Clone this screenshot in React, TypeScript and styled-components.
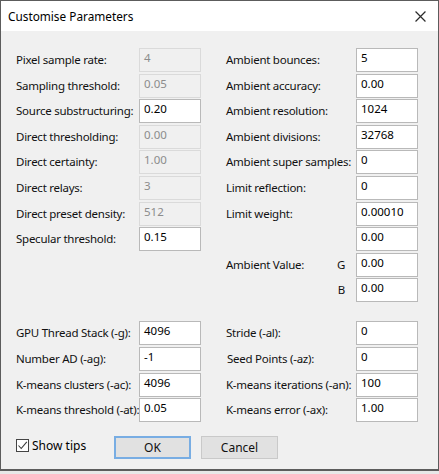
import styled, { createGlobalStyle } from 'styled-components';

const GlobalStyle = createGlobalStyle`
  html, body {
    margin: 0;
    padding: 0;
    background: #e8e8e8;
  }
  body {
    font-family: 'Noto Sans', 'Liberation Sans', sans-serif;
    font-size: 11.5px;
    color: #000;
  }
`;

type Field = { label: string; value: string; enabled?: boolean; side?: string; indent?: number };

const leftTop: Field[] = [
  { label: 'Pixel sample rate:', value: '4' },
  { label: 'Sampling threshold:', value: '0.05' },
  { label: 'Source substructuring:', value: '0.20', enabled: true },
  { label: 'Direct thresholding:', value: '0.00' },
  { label: 'Direct certainty:', value: '1.00' },
  { label: 'Direct relays:', value: '3' },
  { label: 'Direct preset density:', value: '512' },
  { label: 'Specular threshold:', value: '0.15', enabled: true },
];

const rightTop: Field[] = [
  { label: 'Ambient bounces:', value: '5', enabled: true },
  { label: 'Ambient accuracy:', value: '0.00', enabled: true },
  { label: 'Ambient resolution:', value: '1024', enabled: true },
  { label: 'Ambient divisions:', value: '32768', enabled: true },
  { label: 'Ambient super samples:', value: '0', enabled: true },
  { label: 'Limit reflection:', value: '0', enabled: true },
  { label: 'Limit weight:', value: '0.00010', enabled: true },
  { label: '', value: '0.00', enabled: true },
  { label: 'Ambient Value:', value: '0.00', enabled: true, side: 'G' },
  { label: '', value: '0.00', enabled: true, side: 'B' },
];

const leftBottom: Field[] = [
  { label: 'GPU Thread Stack (-g):', value: '4096', enabled: true },
  { label: 'Number AD (-ag):', value: '-1', enabled: true },
  { label: 'K-means clusters (-ac):', value: '4096', enabled: true },
  { label: 'K-means threshold (-at):', value: '0.05', enabled: true },
];

const rightBottom: Field[] = [
  { label: 'Stride (-al):', value: '0', enabled: true, indent: -1 },
  { label: 'Seed Points (-az):', value: '0', enabled: true, indent: 1 },
  { label: 'K-means iterations (-an):', value: '100', enabled: true },
  { label: 'K-means error (-ax):', value: '1.00', enabled: true },
];

function FieldColumn({ fields, labelWidth }: { fields: Field[]; labelWidth: number }) {
  return (
    <StyledColumn $labelWidth={labelWidth}>
      {fields.map((f, i) => (
        <StyledRow key={i}>
          <StyledLabel $indent={f.indent ?? 0}>
            <span>{f.label}</span>
            {f.side && <StyledSide>{f.side}</StyledSide>}
          </StyledLabel>
          <StyledInput $enabled={!!f.enabled}>{f.value}</StyledInput>
        </StyledRow>
      ))}
    </StyledColumn>
  );
}

function App() {
  return (
    <>
      <GlobalStyle />
      <StyledWindow>
        <StyledTitleBar>
          <StyledTitle>Customise Parameters</StyledTitle>
          <StyledClose viewBox="0 0 10 10" width="11" height="11">
            <path d="M0.5 0.5 L9.5 9.5 M9.5 0.5 L0.5 9.5" stroke="#2b2b2b" strokeWidth="1.1" />
          </StyledClose>
        </StyledTitleBar>
        <StyledBody>
          <StyledSection>
            <FieldColumn fields={leftTop} labelWidth={123} />
            <FieldColumn fields={rightTop} labelWidth={130} />
          </StyledSection>
          <StyledSection $top={19}>
            <FieldColumn fields={leftBottom} labelWidth={123} />
            <FieldColumn fields={rightBottom} labelWidth={130} />
          </StyledSection>
          <StyledFooter>
            <StyledCheck>
              <StyledBox>
                <svg viewBox="0 0 13 13" width="13" height="13">
                  <path d="M2.5 6.5 L5.2 9.5 L10.8 2.8" fill="none" stroke="#3a3a3a" strokeWidth="1.1" />
                </svg>
              </StyledBox>
              Show tips
            </StyledCheck>
            <StyledButton $primary>OK</StyledButton>
            <StyledButton>Cancel</StyledButton>
          </StyledFooter>
        </StyledBody>
      </StyledWindow>
    </>
  );
}

const StyledWindow = styled.div`
  width: 439px;
  height: 471px;
  box-sizing: border-box;
  border: 1px solid #5c5c5c;
  border-bottom-width: 2px;
  background: #f0f0f0;
  display: flex;
  flex-direction: column;
`;

const StyledTitleBar = styled.div`
  height: 30px;
  background: #fff;
  display: flex;
  align-items: center;
  justify-content: space-between;
  padding: 0 12px 0 7px;
  flex-shrink: 0;
`;

const StyledTitle = styled.div`
  font-size: 11.8px;
  color: #000;
  padding-bottom: 1px;
`;

const StyledClose = styled.svg`
  display: block;
`;

const StyledBody = styled.div`
  flex: 1;
  padding: 17px 0 0 15px;
  display: flex;
  flex-direction: column;
`;

const StyledSection = styled.div<{ $top?: number }>`
  display: flex;
  gap: 25px;
  align-items: flex-start;
  margin-top: ${(p) => p.$top ?? 0}px;
`;

const StyledColumn = styled.div<{ $labelWidth: number }>`
  display: grid;
  grid-template-columns: ${(p) => p.$labelWidth}px 62px;
  grid-auto-rows: 24px;
  row-gap: 1.6px;
`;

const StyledRow = styled.div`
  display: contents;
`;

const StyledLabel = styled.div<{ $indent: number }>`
  display: flex;
  align-items: center;
  justify-content: space-between;
  padding-left: ${(p) => p.$indent}px;
  padding-bottom: 1px;
  white-space: nowrap;
  letter-spacing: -0.25px;
  color: #111;
`;

const StyledSide = styled.span`
  color: #111;
  padding-right: 11px;
`;

const StyledInput = styled.div<{ $enabled: boolean }>`
  box-sizing: border-box;
  height: 24px;
  border: 1px solid ${(p) => (p.$enabled ? '#b9b9b9' : '#dadada')};
  background: ${(p) => (p.$enabled ? '#fff' : '#f0f0f0')};
  color: ${(p) => (p.$enabled ? '#000' : '#8c8c8c')};
  padding: 1px 0 0 4px;
  line-height: 16px;
`;

const StyledFooter = styled.div`
  display: flex;
  align-items: center;
  margin-top: 14px;
  height: 23px;
`;

const StyledCheck = styled.div`
  display: flex;
  align-items: center;
  gap: 3px;
  width: 98px;
  margin-top: -4px;
  font-size: 12px;
`;

const StyledBox = styled.div`
  width: 13px;
  height: 13px;
  box-sizing: border-box;
  border: 1px solid #444;
  background: #fff;
  display: flex;
  align-items: center;
  justify-content: center;
  svg {
    display: block;
    margin: -1px;
  }
`;

const StyledButton = styled.div<{ $primary?: boolean }>`
  box-sizing: border-box;
  width: 77px;
  height: 23px;
  margin-right: 10px;
  display: flex;
  align-items: center;
  justify-content: center;
  background: #e1e1e1;
  border: ${(p) => (p.$primary ? '2px solid #78ade3' : '1px solid #c9c9c9')};
  font-size: 12px;
  color: #111;
`;

export default App;
